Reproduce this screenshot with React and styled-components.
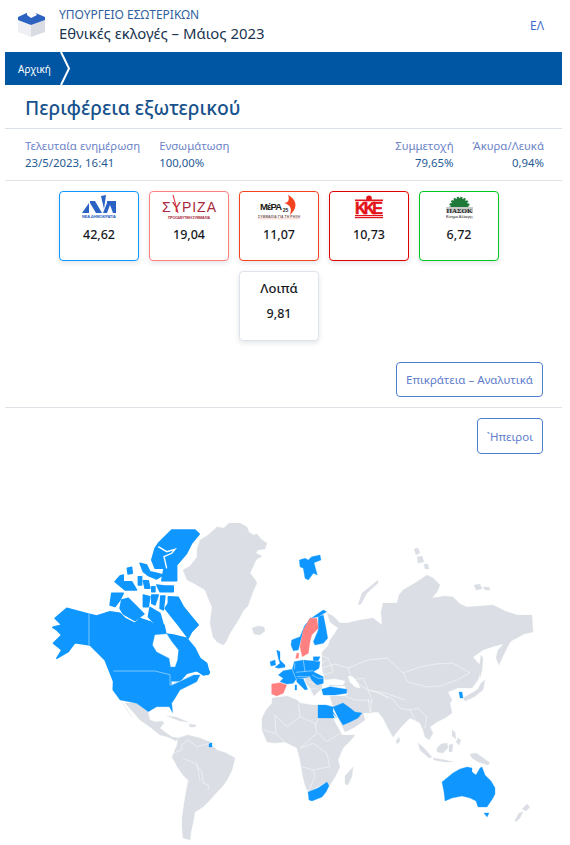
import React from "react";
import styled, { createGlobalStyle } from "styled-components";

const GlobalStyle = createGlobalStyle`
  html, body {
    margin: 0;
    padding: 0;
    background: #fff;
    overflow: hidden;
  }
  body {
    font-family: "Noto Sans", "Open Sans", sans-serif;
  }
`;

const GREY = "#dbdfe5";
const BLUE = "#0f97ff";
const PINK = "#ff8080";

// shapes are written per map tile at 3x scale, tile() brings them to map coordinates
const tile = (ox, oy, list) =>
  list.map((pts) =>
    pts
      .trim()
      .split(/\s+/)
      .map((pair) => {
        const [x, y] = pair.split(",").map(Number);
        return `${(ox + x / 3).toFixed(1)},${(oy + y / 3).toFixed(1)}`;
      })
      .join(" ")
  );

const greyLand = [
  // greenland
  "217,527 224,528 229,523 240,523 247,527 249,532 253,535 257,534 262,540 267,543 265,549 258,550 256,553 262,556 256,560 253,567 250,573 254,578 257,583 253,592 250,600 248,606 243,611 240,617 236,624 230,633 226,642 223,645 217,642 213,637 210,623 212,607 208,598 205,590 195,584 187,580 183,570 190,566 197,557 197,549 200,540 208,535",
  // iceland
  "252,628 258,626 264,627 265,631 260,635 254,634",
  // mexico and central america
  "125,703 137,703 148,712 150,720 156,722 162,721 164,723 160,728 165,732 172,737 178,738 176,741 168,737 160,735 150,727 140,720 133,712",
  "122,702 130,714 132,717 127,710",
  // cuba, hispaniola
  "167,716 176,717 188,722 180,721",
  "189,724 196,725 195,727 190,727",
  // south america
  "178,738 188,735 200,738 210,742 210,746 214,747 217,750 226,753 235,758 232,770 227,780 222,787 217,792 210,800 203,807 195,812 193,823 191,832 190,840 183,838 182,828 182,817 185,797 188,780 183,775 178,768 172,757 177,745",
  // africa
  "272,698 280,697 287,696 297,700 300,703 312,705 318,705 318,718 333,718 335,722 342,735 355,735 350,741 343,748 338,760 340,767 335,777 330,785 328,787 327,782 308,792 305,785 303,777 300,760 297,748 285,742 275,743 267,742 262,730 262,718 266,710 272,703",
  // madagascar
  "353,767 352,776 348,785 345,784 345,776",
  // eurasia
  "327,613 333,616 340,623 347,623 360,620 373,618 382,625 381,612 383,603 397,603 399,595 403,590 415,583 427,575 433,578 440,585 437,592 432,598 445,596 453,597 460,604 467,607 480,606 493,605 505,611 517,615 532,615 533,632 524,634 517,638 507,643 495,646 483,650 473,657 478,663 482,667 480,672 478,680 472,688 464,688 458,688 448,692 452,700 450,703 452,713 445,718 437,722 430,727 433,733 429,740 425,737 423,730 420,723 412,719 410,718 402,726 393,737 388,728 383,718 378,712 370,713 363,713 365,720 355,727 345,732 340,722 337,715 333,707 330,696 345,696 348,694 345,686 330,686 325,680 322,668 322,660 322,652 328,646 330,640 335,633 338,628 330,622",
  // balkans
  "305,677 313,675 322,680 322,688 318,692 314,696 310,688 306,683",
  // novaya zemlya and north islands
  "378,580 372,585 362,593 358,605 361,604 367,593 378,583",
  "414,549 418,548 420,553 416,555",
  "417,557 422,556 424,562 418,563",
  "424,564 428,564 429,569 425,569",
  "474,585 480,584 482,589 476,590",
  "483,587 489,587 490,590 485,590",
  // kamchatka, sakhalin, japan
  "513,638 507,640 498,650 496,658 499,665 503,656 508,646",
  "481,655 483,658 482,670 480,678 479,668",
  "481,683 485,680 483,690 474,697 465,701 463,698 472,693 478,689",
  // sri lanka, se asia islands
  "399,737 396,741 397,744 400,741",
  "418,743 424,748 432,757 429,758 420,750",
  "433,758 445,760 453,762 445,762 434,760",
  "437,748 441,744 447,743 448,748 443,753 437,752",
  "449,745 453,744 452,752 449,752",
  "452,730 455,732 456,739 452,736",
  "458,738 461,740 459,745 456,742",
  // new guinea
  "470,754 476,753 482,757 490,763 488,765 478,762 472,758",
  // new zealand
  "527,804 530,807 526,811 522,809",
  "523,812 520,818 516,822 515,820 519,813",
];

const northAmerica = tile(40, 510, [
  // alaska + canada mainland
  "38,352 65,345 45,325 80,295 145,312 170,318 210,305 240,310 255,325 285,340 300,325 330,335 345,345 372,345 378,372 400,375 440,385 465,415 480,445 500,460 508,490 490,495 470,482 440,490 420,512 220,512 195,450 150,405 105,398 85,425 50,445 65,420 40,400 65,375 50,360",
  // ellesmere
  "355,100 395,60 465,60 478,72 455,100 440,130 410,165 410,212 365,212 372,175 345,175 335,150 345,115",
  // arctic islands
  "300,160 320,165 330,185 350,190 370,195 350,207 325,197 310,185",
  "240,198 250,195 250,215 275,215 290,240 255,240 225,215",
  "262,175 275,172 277,190 264,192",
  "295,200 305,200 305,225 295,225",
  "310,212 325,212 330,235 315,235",
  "335,230 345,230 345,245 335,245",
  "350,225 375,228 400,228 400,245 360,245",
  "215,250 250,250 240,270 225,290 210,285",
  "245,270 265,265 295,295 312,312 285,332 250,312 240,295",
  "310,255 330,260 325,290 310,290",
  "335,255 355,255 345,285 335,280",
  "362,258 375,258 370,300 360,295",
  // baffin
  "385,260 415,262 430,290 450,315 475,345 455,365 445,385 415,345 395,320 375,295 385,280",
  "330,292 360,310 370,345 345,342 325,320",
  // newfoundland
  "490,470 502,475 500,490 490,488",
]);

const lowerUs = tile(100, 670, [
  "40,0 165,0 210,12 215,45 280,15 300,15 290,35 240,60 225,85 215,100 218,128 208,110 170,110 145,125 110,100 60,90 38,60",
  "310,0 330,3 325,15 310,15",
]);

const blueLand = [
  // french guiana
  "209,743 212,743 212,747 209,747",
  // south africa
  "308,792 318,788 327,782 329,786 326,792 322,797 312,801 309,800",
  // egypt
  "318,705 326,705 333,707 333,712 337,718 318,718",
  // saudi
  "333,707 343,703 350,708 355,712 362,713 358,718 350,722 343,725 338,717",
  // s korea
  "459,692 462,692 463,698 460,698",
  // australia
  "442,782 453,773 460,769 467,767 472,768 472,772 476,775 480,768 482,767 485,775 491,781 495,788 495,794 493,798 487,807 478,807 476,801 470,798 462,796 452,798 445,801 444,792",
  "484,813 489,813 487,817",
  // svalbard
  ...tile(240, 510, [
    "178,150 195,145 205,150 215,140 240,135 243,150 222,158 232,195 220,190 205,210 195,205 190,175 180,170",
  ]),
  ...tile(255, 610, [
    // norway
    "110,90 135,80 150,45 175,20 205,0 215,5 190,20 165,25 145,60 135,100 130,120 115,122 108,105",
    // finland
    "190,20 205,15 212,50 218,85 205,100 180,105 175,95 190,60",
    // britain, ireland
    "65,120 75,125 75,150 90,165 90,172 70,175 60,172 75,160 70,145",
    "45,155 60,150 62,165 48,168",
    // turkey
    "200,238 225,230 275,238 275,250 240,255 205,255",
    // sardinia
    "120,225 125,225 125,240 120,240",
    // france to romania, one block
    "70,195 85,182 112,178 118,155 145,150 195,155 192,175 175,185 205,200 205,220 185,225 170,210 165,200 145,205 125,205 115,220 95,222 75,215 85,205",
    // lithuania
    "175,140 195,140 190,152 175,152",
    // italy
    "125,205 145,207 158,238 150,240 125,215",
  ]),
];

const pinkLand = tile(255, 610, [
  // sweden
  "165,25 185,25 190,55 170,75 165,95 160,130 142,140 135,110 145,60",
  // denmark
  "125,130 132,130 130,145 122,145",
  // iberia
  "50,222 75,218 95,225 85,250 65,258 50,252",
]);

// water drawn on top of the land
const water = [
  // hudson bay
  ...tile(40, 510, [
    "345,375 380,372 395,395 415,420 412,450 405,470 392,470 388,445 350,425 338,405",
  ]),
  // black sea + caspian
  "325,680 335,679 345,681 343,685 332,685 326,684",
  "348,676 353,677 358,683 360,688 355,687 350,682",
  // red sea
  "333,714 337,718 342,731 339,727",
];

const channels = tile(40, 510, [
  "355,110 380,125 405,118 395,130 372,140 380,175",
]);

const borders = [
  // alaska, us-canada
  "89,614 89,645",
  ...tile(100, 670, ["40,3 165,3 210,14 210,45 215,45 280,15"]),
  // asia
  "348,668 358,664 368,660 387,658 403,673 420,667 435,664 453,663 470,673 457,680 440,686 427,687 408,682 403,673",
  "348,668 352,680 368,690 385,693 405,700",
  "368,690 372,700 370,713",
  "322,668 335,664 348,668",
  "345,696 355,700 365,700 372,702",
  ...tile(330, 670, [
    "145,70 185,85 210,115 240,120 265,115 290,140 285,175",
    "115,85 120,125 145,130",
    "60,30 100,25 115,60 150,70 175,85",
    "240,120 255,150 262,175",
  ]),
  // south america, africa
  ...tile(100, 670, [
    "220,250 245,240 245,225 265,210",
    "265,210 290,230 330,220",
    "250,265 285,280 305,305 310,340 325,345 325,360",
    "265,330 250,400 245,440",
    "290,280 300,330",
    "525,135 560,170 600,140 645,160 650,190 600,235",
    "595,100 600,140",
    "655,145 645,170",
    "655,190 680,215 720,190",
    "600,235 640,220 680,250 690,290 640,300 605,290",
    "640,300 645,320 625,365",
    "490,180 525,190 555,215",
    "525,135 528,190",
  ]),
  // europe
  ...tile(255, 610, [
    "195,135 220,145 235,185 205,195",
    "215,150 200,160",
    "160,215 185,225",
    "160,235 190,238",
    "112,178 122,205",
    "145,150 150,185",
    "122,187 175,182",
    "125,200 165,200",
    "172,195 190,205 205,205",
    "120,160 118,178",
  ]),
];

const parties = [
  { id: "nd", color: "#0f97ff", value: "42,62" },
  { id: "syriza", color: "#ff8080", value: "19,04" },
  { id: "mera", color: "#f4431f", value: "11,07" },
  { id: "kke", color: "#e00000", value: "10,73" },
  { id: "pasok", color: "#00c81e", value: "6,72" },
];

const NdLogo = () => (
  <LogoSvg viewBox="0 0 72 27">
    <polygon points="19,18 26,8 26,18" fill="#2a62c4" />
    <polygon points="27,6 32,6 39,18 33,18 27,8" fill="#2a62c4" />
    <polygon points="38,1 43,0 41,14" fill="#2a62c4" />
    <polygon points="44,6 53,6 53,18 40,18 44,8" fill="#2a62c4" />
    <polygon points="47,10 44,18 50,18" fill="#fff" />
    <LogoText x="36" y="23" fontSize="4" fill="#2a62c4" fontWeight="700" textLength="34">
      ΝΕΑ ΔΗΜΟΚΡΑΤΙΑ
    </LogoText>
  </LogoSvg>
);

const SyrizaLogo = () => (
  <LogoSvg viewBox="0 0 72 27">
    <LogoText x="36" y="17" fontSize="14" fill="#a82a3c" textLength="54">
      ΣΥΡΙΖΑ
    </LogoText>
    <line x1="20" y1="0" x2="25" y2="18" stroke="#e02030" strokeWidth="1" />
    <LogoText x="36" y="24" fontSize="3.6" fill="#a82a3c" fontWeight="700" textLength="42">
      ΠΡΟΟΔΕΥΤΙΚΗ ΣΥΜΜΑΧΙΑ
    </LogoText>
  </LogoSvg>
);

const MeraLogo = () => (
  <LogoSvg viewBox="0 0 72 27">
    <LogoText x="28" y="15" fontSize="9.5" fill="#1a1a1a" fontWeight="700" textLength="22">
      ΜέΡΑ
    </LogoText>
    <LogoText x="42.5" y="17" fontSize="5" fill="#1a1a1a" fontWeight="700">
      25
    </LogoText>
    <path d="M45 0 C53 4 56 12 47 20 C49 14 48 10 41 8 C45 8 47 5 45 0 Z" fill="#f4431f" />
    <LogoText x="36" y="23" fontSize="3.4" fill="#7a5a5a" fontWeight="700" textLength="42">
      ΣΥΜΜΑΧΙΑ ΓΙΑ ΤΗ ΡΗΞΗ
    </LogoText>
    <line x1="15" y1="23.8" x2="57" y2="23.8" stroke="#f6c0b0" strokeWidth="0.7" />
  </LogoSvg>
);

const KkeLogo = () => (
  <LogoSvg viewBox="0 0 72 27">
    <rect x="22" y="4.5" width="28" height="1.6" fill="#e2131a" />
    <circle cx="36" cy="3.4" r="2.8" fill="#e2131a" />
    <LogoText x="36" y="19" fontSize="16" fill="#e2131a" fontWeight="700" textLength="28" stroke="#e2131a" strokeWidth="0.5">
      ΚΚΕ
    </LogoText>
    <rect x="22" y="20" width="28" height="1.2" fill="#e2131a" />
    <rect x="22" y="22" width="28" height="1.2" fill="#e2131a" />
  </LogoSvg>
);

const PasokLogo = () => (
  <LogoSvg viewBox="0 0 72 27">
    <circle cx="36.5" cy="12" r="9" fill="#1f7a3a" stroke="#1f7a3a" strokeWidth="2.6" strokeDasharray="2 1.3" />
    <rect x="23" y="12" width="27" height="6" fill="#c9cbc9" />
    <rect x="23" y="18" width="27" height="6" fill="#fff" />
    <PasokName x="36.5" y="17.6" fontSize="7" fill="#222" textLength="26">
      ΠΑΣΟΚ
    </PasokName>
    <LogoText x="36.5" y="23" fontSize="3.4" fill="#555" fontWeight="700" textLength="27">
      Κίνημα Αλλαγής
    </LogoText>
  </LogoSvg>
);

const logos = {
  nd: NdLogo,
  syriza: SyrizaLogo,
  mera: MeraLogo,
  kke: KkeLogo,
  pasok: PasokLogo,
};

const App = () => {
  return (
    <>
      <GlobalStyle />
      <Page>
        <Header>
          <BallotBox viewBox="0 0 28 28">
            <polygon points="1,10 14,15 14,27 1,22" fill="#eef0f4" />
            <polygon points="28,10 14,15 14,27 28,22" fill="#d9dde3" />
            <polygon points="1,7 14,1 28,7 28,10 14,15 1,10" fill="#2c62c0" />
            <polygon points="10,0 17,0 20,5 14,8 10,5" fill="#fff" />
          </BallotBox>
          <HeaderText>
            <Ministry>ΥΠΟΥΡΓΕΙΟ ΕΣΩΤΕΡΙΚΩΝ</Ministry>
            <ElectionTitle>Εθνικές εκλογές – Μάιος 2023</ElectionTitle>
          </HeaderText>
          <LangLink>ΕΛ</LangLink>
        </Header>

        <Breadcrumb>
          <CrumbLabel>Αρχική</CrumbLabel>
          <CrumbArrow viewBox="0 0 11 33">
            <polyline points="1,0 9,16.5 1,33" fill="none" stroke="#fff" strokeWidth="2" />
          </CrumbArrow>
        </Breadcrumb>

        <PageTitle>Περιφέρεια εξωτερικού</PageTitle>

        <StatsRow>
          <Stat>
            <StatLabel>Τελευταία ενημέρωση</StatLabel>
            <StatValue>23/5/2023, 16:41</StatValue>
          </Stat>
          <Stat>
            <StatLabel>Ενσωμάτωση</StatLabel>
            <StatValue>100,00%</StatValue>
          </Stat>
          <StatSpacer />
          <Stat $right>
            <StatLabel>Συμμετοχή</StatLabel>
            <StatValue>79,65%</StatValue>
          </Stat>
          <Stat $right>
            <StatLabel>Άκυρα/Λευκά</StatLabel>
            <StatValue>0,94%</StatValue>
          </Stat>
        </StatsRow>

        <Cards>
          {parties.map((p) => {
            const Logo = logos[p.id];
            return (
              <Card key={p.id} $color={p.color}>
                <LogoSlot>
                  <Logo />
                </LogoSlot>
                <CardValue>{p.value}</CardValue>
              </Card>
            );
          })}
          <OtherCard $color="#dfe4ec">
            <OtherName>Λοιπά</OtherName>
            <CardValue>9,81</CardValue>
          </OtherCard>
        </Cards>

        <ButtonRow>
          <OutlineButton>Επικράτεια – Αναλυτικά</OutlineButton>
        </ButtonRow>
        <SecondRow>
          <OutlineButton $tall>`Ηπειροι</OutlineButton>
        </SecondRow>

        <WorldMap viewBox="5 510 557 335">
          {greyLand.map((pts, i) => (
            <Land key={"g" + i} points={pts} $fill={GREY} />
          ))}
          {northAmerica.map((pts, i) => (
            <Land key={"n" + i} points={pts} $fill={BLUE} $grow />
          ))}
          {lowerUs.map((pts, i) => (
            <Land key={"u" + i} points={pts} $fill={BLUE} />
          ))}
          {blueLand.map((pts, i) => (
            <Land key={"b" + i} points={pts} $fill={BLUE} />
          ))}
          {pinkLand.map((pts, i) => (
            <Land key={"p" + i} points={pts} $fill={PINK} />
          ))}
          {water.map((pts, i) => (
            <Land key={"w" + i} points={pts} $fill="#fff" />
          ))}
          {channels.map((pts, i) => (
            <Channel key={"c" + i} points={pts} />
          ))}
          {borders.map((pts, i) => (
            <Border key={"l" + i} points={pts} />
          ))}
        </WorldMap>
      </Page>
    </>
  );
};

const Page = styled.div`
  width: 557px;
  margin-left: 5px;
  height: 845px;
  overflow: hidden;
`;

const Header = styled.div`
  display: flex;
  align-items: flex-start;
  height: 52px;
  padding: 7px 18px 0 12px;
  box-sizing: border-box;
`;

const BallotBox = styled.svg`
  width: 28px;
  height: 28px;
  margin-top: 3px;
  flex-shrink: 0;
`;

const HeaderText = styled.div`
  display: flex;
  flex-direction: column;
  margin-left: 14px;
  flex: 1;
`;

const Ministry = styled.div`
  font-size: 12px;
  line-height: 16px;
  color: #2f5f9e;
`;

const ElectionTitle = styled.div`
  font-size: 14.9px;
  line-height: 20px;
  color: #1b3550;
`;

const LangLink = styled.a`
  font-size: 12px;
  line-height: 16px;
  color: #4068c8;
  margin-top: 11px;
`;

const Breadcrumb = styled.div`
  display: flex;
  align-items: center;
  height: 33px;
  background: #0056a2;
  padding-left: 13px;
`;

const CrumbLabel = styled.span`
  font-size: 10px;
  color: #fff;
`;

const CrumbArrow = styled.svg`
  width: 11px;
  height: 33px;
  margin-left: 9px;
`;

const PageTitle = styled.h1`
  margin: 0;
  height: 43px;
  line-height: 46px;
  padding-left: 20px;
  font-size: 19.3px;
  font-weight: 500;
  color: #17528c;
  border-bottom: 1px solid #d9e0ec;
`;

const StatsRow = styled.div`
  display: flex;
  gap: 19px;
  height: 52px;
  padding: 9px 18px 0 20px;
  box-sizing: border-box;
  border-bottom: 1px solid #dfe3e8;
`;

const StatSpacer = styled.div`
  flex: 1;
`;

const Stat = styled.div`
  display: flex;
  flex-direction: column;
  text-align: ${(p) => (p.$right ? "right" : "left")};
`;

const StatLabel = styled.span`
  font-size: 11.4px;
  line-height: 16px;
  color: #6c84c8;
`;

const StatValue = styled.span`
  font-size: 11.4px;
  line-height: 17px;
  color: #1f5a96;
`;

const Cards = styled.div`
  display: flex;
  flex-wrap: wrap;
  justify-content: center;
  align-content: flex-start;
  gap: 10px;
  width: 458px;
  height: 151px;
  margin: 10px 0 20px 45px;
`;

const Card = styled.div`
  width: 80px;
  height: 70px;
  box-sizing: border-box;
  border: 1px solid ${(p) => p.$color};
  border-radius: 4px;
  background: #fff;
  box-shadow: 0 2px 5px rgba(60, 70, 90, 0.14);
  display: flex;
  flex-direction: column;
  align-items: center;
`;

const OtherCard = styled(Card)`
  padding-top: 7px;
`;

const LogoSlot = styled.div`
  height: 27px;
  display: flex;
  align-items: center;
  justify-content: center;
  margin-top: 3px;
`;

const LogoSvg = styled.svg`
  height: 27px;
  width: 72px;
`;

const LogoText = styled.text`
  font-family: "Liberation Sans", sans-serif;
  text-anchor: middle;
`;

const PasokName = styled.text`
  font-family: "Liberation Serif", serif;
  font-weight: 700;
  text-anchor: middle;
`;

const CardValue = styled.div`
  font-size: 12.5px;
  line-height: 18px;
  margin-top: 4px;
  font-weight: 500;
  color: #15181d;
  ${OtherCard} & {
    margin-top: 8px;
  }
`;

const OtherName = styled.div`
  font-size: 13px;
  line-height: 18px;
  font-weight: 500;
  color: #15181d;
`;

const ButtonRow = styled.div`
  display: flex;
  justify-content: flex-end;
  padding: 0 19px 10px 0;
  border-bottom: 1px solid #dfe3e8;
`;

const SecondRow = styled.div`
  display: flex;
  justify-content: flex-end;
  padding: 10px 19px 0 0;
`;

const OutlineButton = styled.button`
  font-family: inherit;
  font-size: 11.5px;
  height: ${(p) => (p.$tall ? "36px" : "35px")};
  padding: 0 9px;
  background: #fff;
  border: 1px solid #4f7fd0;
  border-radius: 4px;
  color: #5f7ccc;
`;

const WorldMap = styled.svg`
  display: block;
  width: 557px;
  height: 335px;
  margin-top: 56px;
`;

const Land = styled.polygon`
  fill: ${(p) => p.$fill};
  stroke: ${(p) => p.$fill};
  stroke-width: ${(p) => (p.$grow ? 1.4 : 0.3)};
  stroke-linejoin: round;
`;

const Channel = styled.polyline`
  fill: none;
  stroke: #fff;
  stroke-width: 1.4;
`;

const Border = styled.polyline`
  fill: none;
  stroke: #fff;
  stroke-opacity: 0.75;
  stroke-width: 0.6;
`;

export default App;
